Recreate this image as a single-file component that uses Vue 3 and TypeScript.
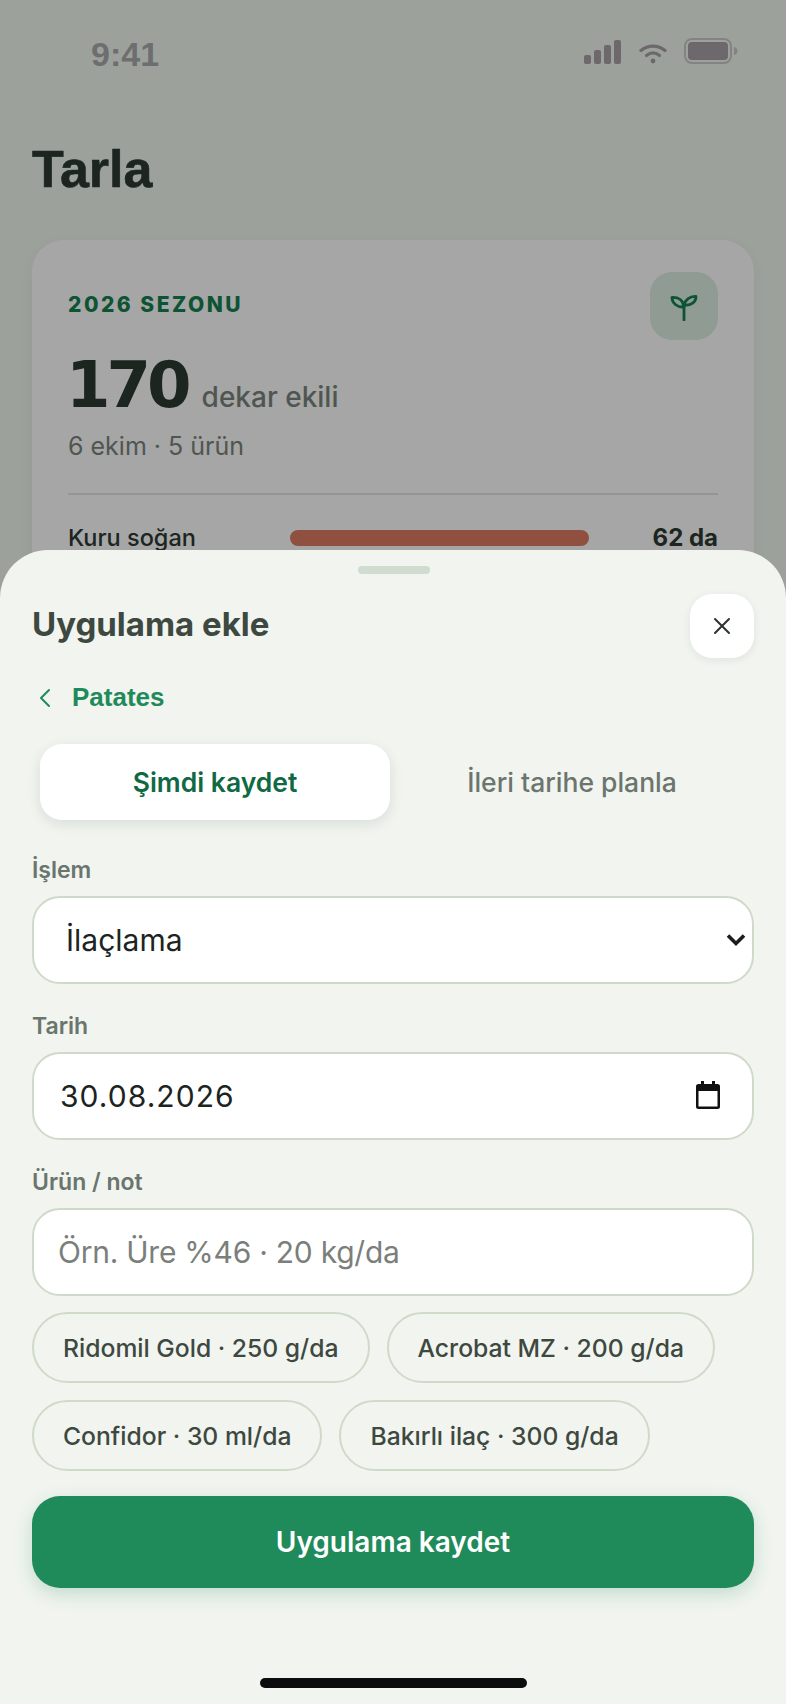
<template>
  <div class="screen">
    <div class="page">
      <div class="status">
        <span class="time">9:41</span>
        <div class="status-icons">
          <svg width="38" height="24" viewBox="0 0 38 24" fill="#a6a0a6">
            <rect x="0" y="15" width="7" height="9" rx="2" />
            <rect x="10" y="10" width="7" height="14" rx="2" />
            <rect x="20" y="5" width="7" height="19" rx="2" />
            <rect x="30" y="0" width="7" height="24" rx="2" />
          </svg>
          <svg width="28" height="20" viewBox="0 0 28 20" fill="none" stroke="#a6a0a6" stroke-width="3.2" stroke-linecap="round">
            <path d="M2 6.5C9 .6 19 .6 26 6.5" />
            <path d="M7.5 11.5c4-3.2 9-3.2 13 0" />
            <circle cx="14" cy="17" r="2.4" fill="#a6a0a6" stroke="none" />
          </svg>
          <svg width="54" height="26" viewBox="0 0 54 26" fill="none">
            <rect x="1" y="1" width="46" height="24" rx="7" stroke="#cacaca" stroke-width="2" />
            <rect x="4" y="4" width="40" height="18" rx="4" fill="#a6a0a6" />
            <path d="M50 9c2.500.6 3.500 2 3.500 4s-1 3.400-3.500 4z" fill="#cacaca" />
          </svg>
        </div>
      </div>

      <h1 class="title">Tarla</h1>

      <section class="card">
        <div class="card-top">
          <span class="season">2026 SEZONU</span>
          <div class="sprout">
            <svg width="30" height="30" viewBox="0 0 30 30" fill="none" stroke="#148050" stroke-width="2.8" stroke-linecap="round" stroke-linejoin="round">
              <path d="M15 29V15" />
              <path d="M15 16C14 9 9 6 3 6.500 3 12 8 16.500 15 16z" />
              <path d="M15 14C16 9 21 5 27 5.500 27 11 22 15 15 14z" />
            </svg>
          </div>
        </div>
        <div class="total"><strong>170</strong><span>dekar ekili</span></div>
        <p class="sub">6 ekim · 5 ürün</p>
        <div class="rows">
          <div v-for="row in crops" :key="row.name" class="crop-row">
            <span class="crop-name">{{ row.name }}</span>
            <div class="track"><div class="fill" :style="{ width: row.pct + '%', background: row.color }"></div></div>
            <span class="crop-val">{{ row.value }} da</span>
          </div>
        </div>
      </section>
    </div>

    <div class="scrim"></div>

    <section class="sheet">
      <div class="handle"></div>
      <header class="sheet-head">
        <h2>Uygulama ekle</h2>
        <button class="close" type="button" aria-label="Kapat">
          <svg width="18" height="18" viewBox="0 0 18 18" fill="none" stroke="#2c332e" stroke-width="2" stroke-linecap="round">
            <path d="M2 2l14 14M16 2L2 16" />
          </svg>
        </button>
      </header>

      <button class="back" type="button">
        <svg width="14" height="20" viewBox="0 0 14 20" fill="none" stroke="#1f8a5a" stroke-width="2" stroke-linecap="round" stroke-linejoin="round">
          <path d="M11 2L3 10l8 8" />
        </svg>
        <span>Patates</span>
      </button>

      <div class="segment">
        <button class="seg active" type="button">Şimdi kaydet</button>
        <button class="seg" type="button">İleri tarihe planla</button>
      </div>

      <label class="field-label first">İşlem</label>
      <div class="control">
        <select v-model="action" class="input select">
          <option v-for="a in actions" :key="a">{{ a }}</option>
        </select>
        <svg class="select-arrow" width="20" height="14" viewBox="0 0 20 14" fill="none" stroke="#1b1f1c" stroke-width="3.600">
          <path d="M2 2.500l8 8 8-8" />
        </svg>
      </div>

      <label class="field-label">Tarih</label>
      <div class="control">
        <input v-model="date" class="input date" type="text" />
        <svg class="cal" width="28" height="30" viewBox="0 0 28 30" fill="#111">
          <path d="M7 1h3v3h8V1h3v3h2.500A2.500 2.500 0 0 1 26 6.500v20a2.500 2.500 0 0 1-2.500 2.500h-19A2.500 2.500 0 0 1 2 26.500v-20A2.500 2.500 0 0 1 4.500 4H7zM4.500 11v15.500h19V11z" />
        </svg>
      </div>

      <label class="field-label">Ürün / not</label>
      <input class="input note" type="text" placeholder="Örn. Üre %46 · 20 kg/da" />

      <div class="chips">
        <button v-for="c in chips" :key="c" class="chip" type="button">{{ c }}</button>
      </div>

      <button class="save" type="button">Uygulama kaydet</button>
      <div class="home"></div>
    </section>
  </div>
</template>

<script setup lang="ts">
import { ref } from 'vue'

const crops = [{ name: 'Kuru soğan', pct: 100, color: '#dc7b63', value: 62 }]

const actions = ['İlaçlama', 'Sulama', 'Gübreleme']
const action = ref('İlaçlama')
const date = ref('30.08.2026')

const chips = [
  'Ridomil Gold · 250 g/da',
  'Acrobat MZ · 200 g/da',
  'Confidor · 30 ml/da',
  'Bakırlı ilaç · 300 g/da',
]
</script>

<style>
html, body { margin: 0; background: #9ca29b; }
</style>

<style scoped>
* { box-sizing: border-box; }

.screen {
  position: relative;
  width: 786px;
  height: 1704px;
  overflow: hidden;
  background: #f0f9ef;
  font-family: Inter, "Liberation Sans", sans-serif;
  color: #1c241f;
}

.page { padding: 0 32px; }

.status {
  display: flex;
  justify-content: space-between;
  align-items: flex-start;
  height: 116px;
  padding: 34px 16px 0 59px;
}

.time {
  font-family: "Liberation Sans", sans-serif;
  font-size: 34px;
  font-weight: 700;
  color: #a9a9ac;
  line-height: 40px;
}

.status-icons {
  display: flex;
  align-items: flex-end;
  gap: 17px;
  padding-top: 4px;
}

.title {
  margin: 18px 0 36px;
  font-family: "Liberation Sans", sans-serif;
  font-size: 52px;
  line-height: 70px;
  font-weight: 700;
  color: #2c3a30;
  -webkit-text-stroke: 0.6px #2c3a30;
}

.card {
  height: 500px;
  padding: 32px 36px;
  background: #fff;
  border-radius: 32px;
  box-shadow: 0 4px 20px rgba(20, 40, 30, 0.05);
}

.card-top {
  display: flex;
  justify-content: space-between;
  align-items: center;
}

.season {
  padding-bottom: 4px;
  font-size: 21px;
  font-weight: 800;
  letter-spacing: 2.5px;
  color: #148050;
}

.sprout {
  display: flex;
  align-items: center;
  justify-content: center;
  width: 68px;
  height: 68px;
  border-radius: 22px;
  background: #dcefe2;
}

.total {
  display: flex;
  align-items: baseline;
  gap: 14px;
  margin-top: 5px;
}

.total strong {
  margin-left: -2px;
  font-family: "DejaVu Sans", sans-serif;
  font-size: 64px;
  line-height: 80px;
  font-weight: 700;
  letter-spacing: -4px;
  color: #2c3a30;
}

.total span {
  font-size: 28px;
  font-weight: 500;
  color: #7a847c;
}

.sub {
  margin: 5px 0 0;
  font-size: 25px;
  line-height: 32px;
  color: #7a847c;
}

.rows {
  margin-top: 31px;
  padding-top: 28px;
  border-top: 2px solid #e2e6df;
}

.crop-row {
  display: flex;
  align-items: center;
}

.crop-name {
  width: 222px;
  font-size: 23.5px;
  font-weight: 500;
  color: #2c3a30;
}

.track { width: 299px; height: 16px; }

.fill { height: 100%; border-radius: 8px; }

.crop-val {
  flex: 1;
  text-align: right;
  font-size: 24px;
  font-weight: 700;
  color: #2c3a30;
}

.scrim {
  position: absolute;
  inset: 0;
  background: rgba(0, 0, 0, 0.35);
}

.sheet {
  position: absolute;
  left: 0;
  right: 0;
  bottom: 0;
  height: 1154px;
  padding: 16px 32px 0;
  background: #f1f4ef;
  border-radius: 48px 48px 0 0;
}

.handle {
  width: 72px;
  height: 8px;
  margin-left: 326px;
  border-radius: 4px;
  background: #d0dcd0;
}

.sheet-head {
  display: flex;
  justify-content: space-between;
  align-items: center;
  margin-top: 20px;
}

.sheet-head h2 {
  margin: 0;
  padding-bottom: 4px;
  font-size: 33px;
  font-weight: 700;
  color: #3d4840;
}

.close {
  display: flex;
  align-items: center;
  justify-content: center;
  width: 64px;
  height: 64px;
  padding: 0;
  border: 0;
  border-radius: 22px;
  background: #fff;
  box-shadow: 0 2px 8px rgba(20, 40, 30, 0.08);
}

.back {
  display: flex;
  align-items: center;
  gap: 20px;
  margin-top: 24px;
  padding: 0 0 0 6px;
  border: 0;
  background: none;
  font-family: "Liberation Sans", sans-serif;
  font-size: 26px;
  font-weight: 700;
  color: #1f8a5a;
}

.segment {
  display: grid;
  grid-template-columns: 350px 1fr;
  gap: 8px;
  margin-top: 31px;
  padding: 0 8px;
}

.seg {
  height: 76px;
  border: 0;
  border-radius: 22px;
  background: none;
  font-family: inherit;
  font-size: 26.500px;
  font-weight: 500;
  color: #6b756d;
}

.seg.active {
  font-weight: 600;
  background: #fff;
  color: #0f6a43;
  box-shadow: 0 4px 14px rgba(20, 40, 30, 0.1);
}

.field-label {
  display: block;
  margin: 27px 0 11px;
  font-size: 23px;
  line-height: 30px;
  font-weight: 600;
  color: #6a756d;
}

.field-label.first { margin-top: 35px; }

.control { position: relative; }

.input {
  display: block;
  width: 100%;
  height: 88px;
  border: 2px solid #d0dac9;
  border-radius: 28px;
  background: #fff;
  font-family: inherit;
  font-size: 30px;
  color: #1c241f;
  outline: none;
}

.select {
  appearance: none;
  padding: 0 60px 0 32px;
}

.date { padding: 0 60px 0 26px; letter-spacing: 1.05px; }

.note { padding: 0 24px; letter-spacing: -0.25px; }

.note::placeholder { color: #7b7f7b; opacity: 1; }

.select-arrow {
  position: absolute;
  right: 8px;
  top: 37px;
}

.cal {
  position: absolute;
  right: 32px;
  top: 28px;
}

.chips {
  display: flex;
  flex-wrap: wrap;
  gap: 17px;
  margin-top: 16px;
}

.chip {
  height: 71px;
  padding: 0 29px;
  border: 2px solid #d0dac9;
  border-radius: 36px;
  background: none;
  font-family: inherit;
  font-size: 24.700px;
  font-weight: 500;
  color: #3d4840;
}

.save {
  display: block;
  width: 100%;
  height: 92px;
  margin-top: 25px;
  border: 0;
  border-radius: 28px;
  background: #1f8a5a;
  font-family: inherit;
  font-size: 28px;
  font-weight: 600;
  color: #fff;
  box-shadow: 0 6px 18px rgba(31, 138, 90, 0.22);
}

.home {
  position: absolute;
  left: 260px;
  bottom: 16px;
  width: 267px;
  height: 10px;
  border-radius: 5px;
  background: #0c0c0e;
}
</style>
